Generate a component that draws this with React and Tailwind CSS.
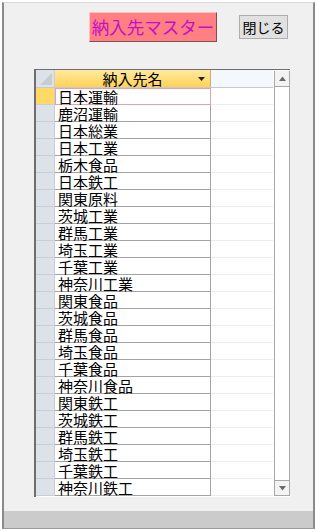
import React from "react";

const names = [
  "日本運輸", "鹿沼運輸", "日本総業", "日本工業", "栃木食品", "日本鉄工",
  "関東原料", "茨城工業", "群馬工業", "埼玉工業", "千葉工業", "神奈川工業",
  "関東食品", "茨城食品", "群馬食品", "埼玉食品", "千葉食品", "神奈川食品",
  "関東鉄工", "茨城鉄工", "群馬鉄工", "埼玉鉄工", "千葉鉄工", "神奈川鉄工",
];

const font = { fontFamily: '"Noto Sans CJK JP", "Noto Sans", sans-serif' };

const Arrow = ({ down = false }) => (
  <svg width="9" height="5" viewBox="0 0 9 5">
    <path d={down ? "M1 0 L8 0 L4.5 4.5 Z" : "M1 5 L8 5 L4.5 0.5 Z"} fill="#6b6b6b" />
  </svg>
);

const App = () => {
  return (
    <div className="w-[317px] h-[532px] bg-white" style={font}>
      <div className="ml-[2px] mt-[2px] w-[313px] h-[527px] bg-[#f0f0f0] border-l-2 border-r-2 border-t border-b border-l-[#8a8a8a] border-r-[#8a8a8a] border-t-[#d8d8d8] border-b-[#9a9a9a] flex flex-col">
        <div className="flex items-center ml-[85px] mt-[9px]">
          <div className="w-[128px] h-[30px] bg-[#ff7f83] border border-t-[#ffc0c2] border-l-[#ffc0c2] border-b-[#7a5050] border-r-[#7a5050] flex items-center justify-center text-[17.5px] leading-none text-[#c410c4] whitespace-nowrap">
            納入先マスター
          </div>
          <div className="ml-[22px] w-[49px] h-[24px] bg-[#e1e1e1] border border-[#adadad] flex items-center justify-center text-[14px] leading-none text-black">
            閉じる
          </div>
        </div>

        <div className="ml-[30px] mt-[27px] w-[256px] h-[428px] bg-white border-l-2 border-t border-[#6e6e6e] flex">
          <div className="flex flex-col w-[237px]">
            <div className="flex h-[18px] border-b border-[#c4c9d0]">
              <div className="w-[19px] h-full bg-[#dde2e8] border-r border-[#c9ced6] flex items-end justify-end p-[2px]">
                <svg width="12" height="12" viewBox="0 0 12 12">
                  <path d="M12 0 L12 12 L0 12 Z" fill="#c7ccd3" />
                </svg>
              </div>
              <div className="w-[156px] h-full bg-gradient-to-b from-[#ffeaa0] to-[#ffd250] border-r border-[#c8b070] relative flex items-center justify-center text-[15px] leading-none text-black">
                納入先名
                <svg className="absolute right-[5px] top-[7px]" width="7" height="4" viewBox="0 0 7 4">
                  <path d="M0 0 L7 0 L3.5 4 Z" fill="#222" />
                </svg>
              </div>
              <div className="flex-1 h-full bg-[#f4f7fb]" />
            </div>
            {names.map((n, i) => (
              <div key={n} className="flex h-[17px]">
                <div
                  className={
                    i === 0
                      ? "w-[19px] h-full bg-[#ffd966] border-b border-r border-[#c9ced6]"
                      : "w-[19px] h-full bg-[#dde2e8] border-b border-r border-[#c9ced6]"
                  }
                />
                <div
                  className={
                    i === 0
                      ? "w-[156px] h-full border border-[#e8a0a8] pl-[2px] flex items-center"
                      : "w-[156px] h-full border-b border-r border-[#a3a3a3] pl-[3px] flex items-center"
                  }
                >
                  <div className="text-[15px] leading-[15px] text-black">{n}</div>
                </div>
                <div className="flex-1 h-full border-b border-[#ececec]" />
              </div>
            ))}
          </div>
          <div className="w-[16px] my-[1px] ml-[1px] flex flex-col border-x border-[#a8a8a8] bg-white">
            <div className="h-[16px] bg-[#f3f3f3] border-b border-[#a8a8a8] flex items-center justify-center">
              <Arrow />
            </div>
            <div className="flex-1" />
            <div className="h-[16px] bg-[#f3f3f3] border-t border-b border-[#a8a8a8] flex items-center justify-center">
              <Arrow down />
            </div>
          </div>
        </div>

        <div className="mt-auto h-[17px] bg-[#cbcbcb]" />
      </div>
    </div>
  );
};

export default App;
